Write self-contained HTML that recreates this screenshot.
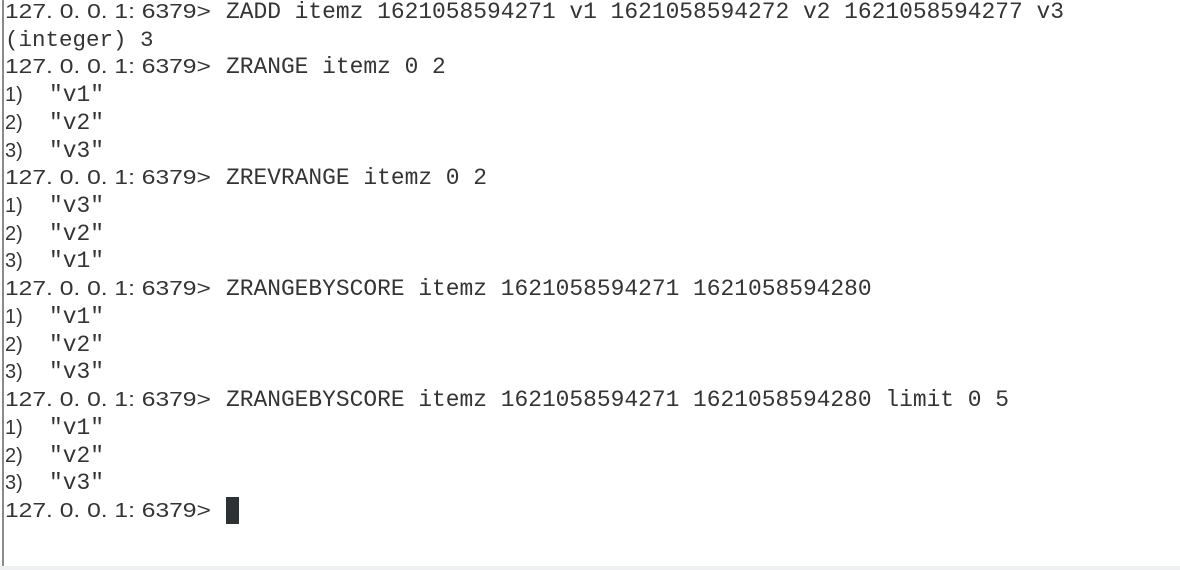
<!DOCTYPE html>
<html><head><meta charset="utf-8"><style>
html,body{margin:0;padding:0;background:#fff;}
body{width:1180px;height:570px;position:relative;overflow:hidden;color:#343434;}
.bar{position:absolute;left:2px;top:0;width:2px;height:566px;background:#8a8a8a;}
.bot{position:absolute;left:0;top:566px;width:1180px;height:4px;background:#eef0f3;}
.l{position:absolute;left:5px;height:26px;line-height:26px;white-space:pre;}
.p{display:inline-block;font-family:"Liberation Sans",sans-serif;font-size:20px;transform:scaleX(1.23);transform-origin:0 50%;}
.m{position:absolute;left:221px;font-family:"Liberation Mono",monospace;font-size:22.9px;}
.n{font-family:"Liberation Sans",sans-serif;font-size:20px;}
.q{position:absolute;left:44px;font-family:"Liberation Mono",monospace;font-size:22.9px;}
.cur{position:absolute;left:226px;top:497px;width:13px;height:27px;background:#2c3133;}
</style></head><body>
<div class="bar"></div><div class="bot"></div>
<div class="l" style="top:-1px"><span class="p">127. 0. 0. 1: 6379&gt;</span><span class="m">ZADD itemz 1621058594271 v1 1621058594272 v2 1621058594277 v3</span></div>
<div class="l" style="top:27px;font-family:'Liberation Mono',monospace;font-size:22.5px">(integer) 3</div>
<div class="l" style="top:54px"><span class="p">127. 0. 0. 1: 6379&gt;</span><span class="m">ZRANGE itemz 0 2</span></div>
<div class="l" style="top:82px"><span class="n">1)</span><span class="q">"v1"</span></div>
<div class="l" style="top:110px"><span class="n">2)</span><span class="q">"v2"</span></div>
<div class="l" style="top:138px"><span class="n">3)</span><span class="q">"v3"</span></div>
<div class="l" style="top:165px"><span class="p">127. 0. 0. 1: 6379&gt;</span><span class="m">ZREVRANGE itemz 0 2</span></div>
<div class="l" style="top:193px"><span class="n">1)</span><span class="q">"v3"</span></div>
<div class="l" style="top:221px"><span class="n">2)</span><span class="q">"v2"</span></div>
<div class="l" style="top:248px"><span class="n">3)</span><span class="q">"v1"</span></div>
<div class="l" style="top:276px"><span class="p">127. 0. 0. 1: 6379&gt;</span><span class="m">ZRANGEBYSCORE itemz 1621058594271 1621058594280</span></div>
<div class="l" style="top:304px"><span class="n">1)</span><span class="q">"v1"</span></div>
<div class="l" style="top:332px"><span class="n">2)</span><span class="q">"v2"</span></div>
<div class="l" style="top:359px"><span class="n">3)</span><span class="q">"v3"</span></div>
<div class="l" style="top:387px"><span class="p">127. 0. 0. 1: 6379&gt;</span><span class="m">ZRANGEBYSCORE itemz 1621058594271 1621058594280 limit 0 5</span></div>
<div class="l" style="top:415px"><span class="n">1)</span><span class="q">"v1"</span></div>
<div class="l" style="top:443px"><span class="n">2)</span><span class="q">"v2"</span></div>
<div class="l" style="top:470px"><span class="n">3)</span><span class="q">"v3"</span></div>
<div class="l" style="top:498px"><span class="p">127. 0. 0. 1: 6379&gt;</span></div>
<div class="cur"></div>
</body></html>
